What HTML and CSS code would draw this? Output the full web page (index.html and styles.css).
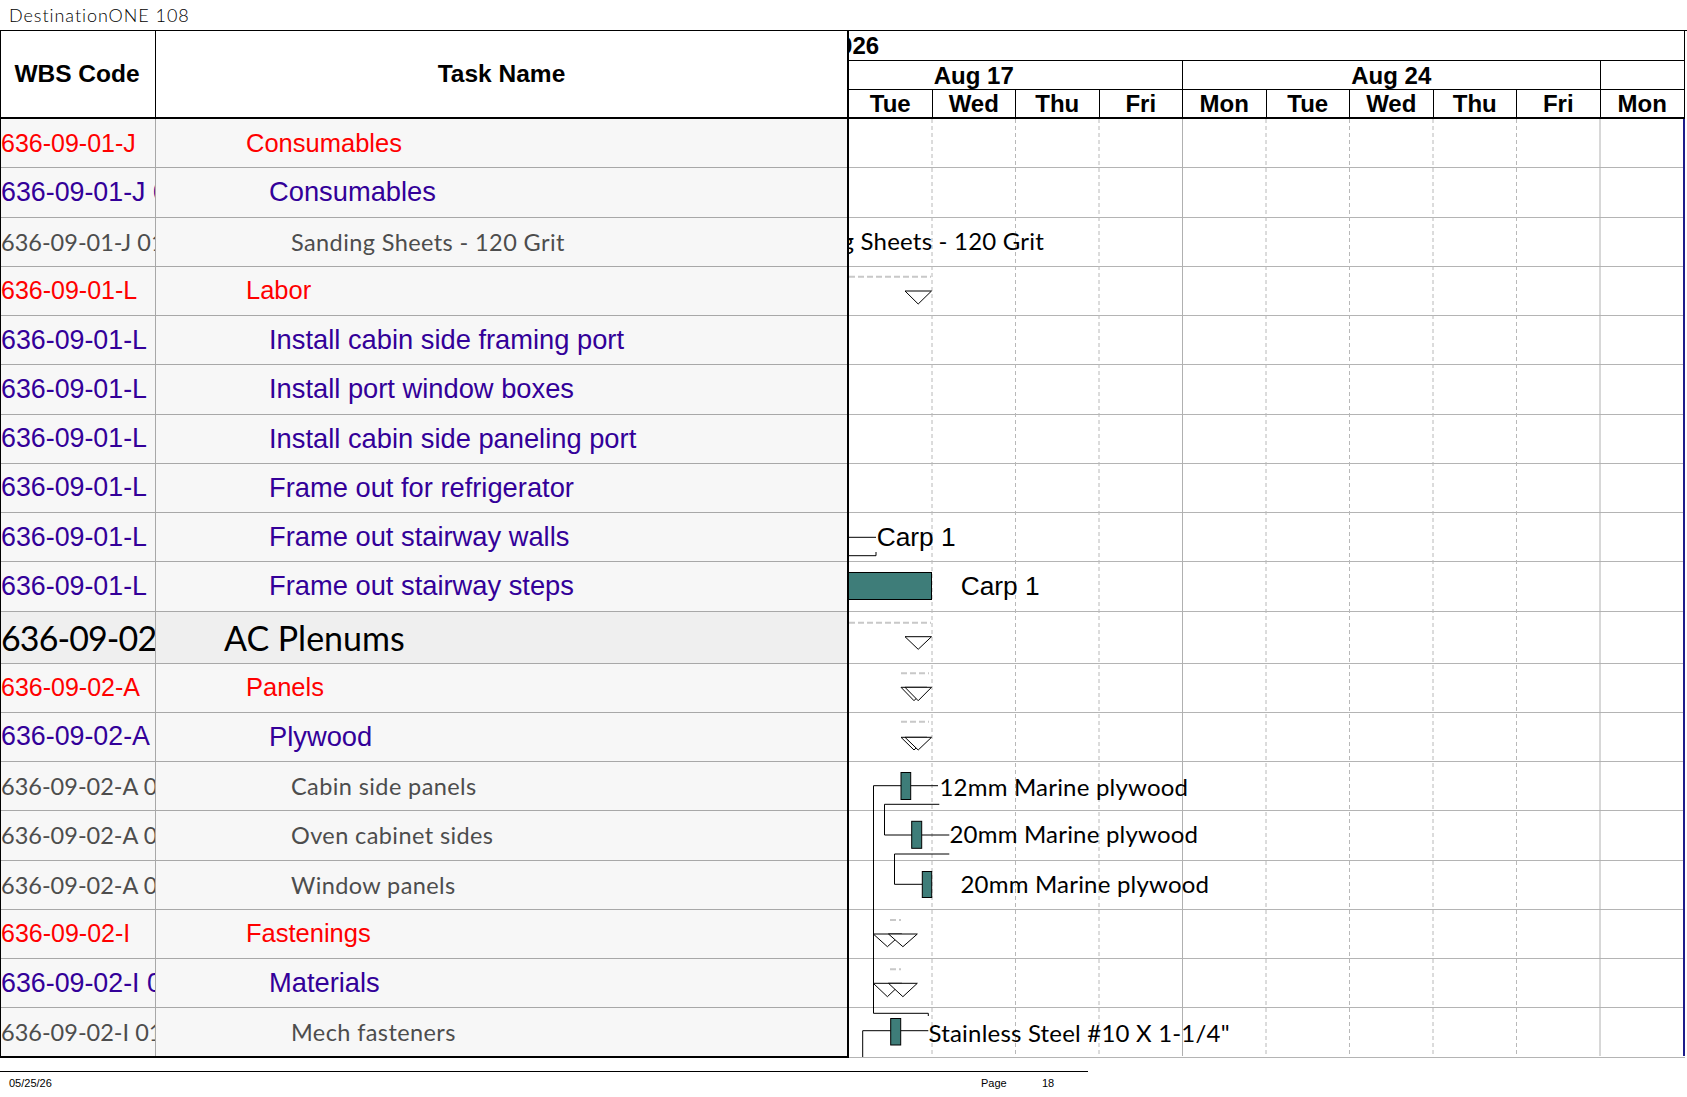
FILE: index.html
```html
<!DOCTYPE html>
<html>
<head>
<meta charset="utf-8">
<title>DestinationONE 108</title>
<link rel="stylesheet" href="styles.css">
</head>
<body>
<div class="title">DestinationONE 108</div>
<div class="sheet">
  <div class="table">
    <div class="thead">
      <div class="th-wbs">WBS Code</div>
      <div class="th-task">Task Name</div>
    </div>
    <div class="tbody">
      <div class="row l1"><div class="wbs"><span>636-09-01-J</span></div><div class="name">Consumables</div></div>
      <div class="row l2"><div class="wbs"><span>636-09-01-J 01</span></div><div class="name">Consumables</div></div>
      <div class="row l3"><div class="wbs"><span>636-09-01-J 01-01</span></div><div class="name">Sanding Sheets - 120 Grit</div></div>
      <div class="row l1"><div class="wbs"><span>636-09-01-L</span></div><div class="name">Labor</div></div>
      <div class="row l2"><div class="wbs"><span>636-09-01-L 10</span></div><div class="name">Install cabin side framing port</div></div>
      <div class="row l2"><div class="wbs"><span>636-09-01-L 11</span></div><div class="name">Install port window boxes</div></div>
      <div class="row l2"><div class="wbs"><span>636-09-01-L 12</span></div><div class="name">Install cabin side paneling port</div></div>
      <div class="row l2"><div class="wbs"><span>636-09-01-L 13</span></div><div class="name">Frame out for refrigerator</div></div>
      <div class="row l2"><div class="wbs"><span>636-09-01-L 14</span></div><div class="name">Frame out stairway walls</div></div>
      <div class="row l2"><div class="wbs"><span>636-09-01-L 15</span></div><div class="name">Frame out stairway steps</div></div>
      <div class="row l0 big"><div class="wbs"><span>636-09-02</span></div><div class="name">AC Plenums</div></div>
      <div class="row l1"><div class="wbs"><span>636-09-02-A</span></div><div class="name">Panels</div></div>
      <div class="row l2"><div class="wbs"><span>636-09-02-A 01</span></div><div class="name">Plywood</div></div>
      <div class="row l3"><div class="wbs"><span>636-09-02-A 01-01</span></div><div class="name">Cabin side panels</div></div>
      <div class="row l3"><div class="wbs"><span>636-09-02-A 01-02</span></div><div class="name">Oven cabinet sides</div></div>
      <div class="row l3"><div class="wbs"><span>636-09-02-A 01-03</span></div><div class="name">Window panels</div></div>
      <div class="row l1"><div class="wbs"><span>636-09-02-I</span></div><div class="name">Fastenings</div></div>
      <div class="row l2"><div class="wbs"><span>636-09-02-I 01</span></div><div class="name">Materials</div></div>
      <div class="row l3"><div class="wbs"><span>636-09-02-I 01-01</span></div><div class="name">Mech fasteners</div></div>
    </div>
  </div>
  <div class="chart">
    <div class="chart-head">
      <div class="year"><span>2026</span></div>
      <div class="weeks">
        <div class="wk first">Aug 17</div>
        <div class="wk">Aug 24</div>
        <div class="wk">Aug 31</div>
      </div>
      <div class="days">
        <div class="day">Tue</div>
        <div class="day">Wed</div>
        <div class="day">Thu</div>
        <div class="day">Fri</div>
        <div class="day">Mon</div>
        <div class="day">Tue</div>
        <div class="day">Wed</div>
        <div class="day">Thu</div>
        <div class="day">Fri</div>
        <div class="day last">Mon</div>
      </div>
    </div>
    <div class="chart-body">
      <div class="grow"></div><div class="grow"></div><div class="grow"></div><div class="grow"></div>
      <div class="grow"></div><div class="grow"></div><div class="grow"></div><div class="grow"></div>
      <div class="grow"></div><div class="grow"></div><div class="grow big"></div><div class="grow"></div>
      <div class="grow"></div><div class="grow"></div><div class="grow"></div><div class="grow"></div>
      <div class="grow"></div><div class="grow"></div><div class="grow"></div>
      <svg class="gantt" viewBox="849 119 836 938.5" xmlns="http://www.w3.org/2000/svg">
        <g class="vday">
          <line x1="932" y1="119" x2="932" y2="1056"/>
          <line x1="1015.5" y1="119" x2="1015.5" y2="1056"/>
          <line x1="1099" y1="119" x2="1099" y2="1056"/>
          <line x1="1266" y1="119" x2="1266" y2="1056"/>
          <line x1="1349.5" y1="119" x2="1349.5" y2="1056"/>
          <line x1="1433" y1="119" x2="1433" y2="1056"/>
          <line x1="1516.5" y1="119" x2="1516.5" y2="1056"/>
        </g>
        <g class="vweek">
          <line x1="1182.5" y1="119" x2="1182.5" y2="1056"/>
          <line x1="1600" y1="119" x2="1600" y2="1056"/>
        </g>
        <line class="status" x1="1684" y1="119" x2="1684" y2="1056"/>

        <g class="sumdash">
          <line x1="849" y1="276.7" x2="931" y2="276.7"/>
          <line x1="849" y1="622.7" x2="931" y2="622.7"/>
          <line x1="901" y1="673.3" x2="929" y2="673.3"/>
          <line x1="901" y1="721.7" x2="929" y2="721.7"/>
          <line x1="890" y1="920" x2="901" y2="920"/>
          <line x1="890" y1="969.3" x2="901" y2="969.3"/>
        </g>

        <g class="tri">
          <polygon points="905,291 931.5,291 918.2,304"/>
          <polygon points="905,636.7 931.5,636.7 918.2,649.3"/>
          <polygon points="901,687.3 927,687.3 914,700.7"/>
          <polygon points="905,687.3 931.5,687.3 918.2,700.7"/>
          <polygon points="901,737.3 927,737.3 914,750"/>
          <polygon points="905,737.3 931.5,737.3 918.2,750"/>
          <polygon points="873.3,934 901.5,934 887.4,946.7"/>
          <polygon points="888.5,934 917.3,934 902.9,946.7"/>
          <polygon points="873.3,983.3 901.5,983.3 887.4,996.7"/>
          <polygon points="888.5,983.3 917.3,983.3 902.9,996.7"/>
        </g>

        <g class="link">
          <polyline points="849,537.3 876,537.3"/>
          <polyline points="849,555.7 876,555.7 876,552"/>
          <polyline points="901,785.7 873.5,785.7 873.5,1013.3 928.3,1013.3 928.3,1016"/>
          <polyline points="910.7,785.7 938,785.7"/>
          <polyline points="939.3,804.3 884.5,804.3 884.5,835 911.7,835"/>
          <polyline points="921.7,835 949.3,835"/>
          <polyline points="949.3,854 894.5,854 894.5,884.3 922.3,884.3"/>
          <polyline points="900.7,1030.7 928.3,1030.7"/>
          <polyline points="890.7,1030.7 862.7,1030.7 862.7,1057"/>
        </g>

        <g class="bar">
          <rect x="848.5" y="572.5" width="83" height="27"/>
          <rect x="901" y="772.5" width="9.7" height="27"/>
          <rect x="911.7" y="821.3" width="10" height="27"/>
          <rect x="922.3" y="871.5" width="9.4" height="26"/>
          <rect x="890.7" y="1018.5" width="10" height="26.5"/>
        </g>

        <text class="lbl" x="1044" y="250" text-anchor="end">Sanding Sheets - 120 Grit</text>
        <text class="lbl-a" x="876.7" y="545.7">Carp 1</text>
        <text class="lbl-a" x="960.7" y="595">Carp 1</text>
        <text class="lbl" x="939.5" y="795.7">12mm Marine plywood</text>
        <text class="lbl" x="949.5" y="843.3">20mm Marine plywood</text>
        <text class="lbl" x="960.5" y="893.3">20mm Marine plywood</text>
        <text class="lbl" x="928.5" y="1041.7">Stainless Steel #10 X 1-1/4"</text>
      </svg>
    </div>
  </div>
</div>
<div class="footer">
  <div class="f-date">05/25/26</div>
  <div class="f-page">Page</div>
  <div class="f-num">18</div>
</div>
</body>
</html>
```
FILE: styles.css
```css
* { box-sizing: border-box; }

body {
  margin: 0;
  width: 1687px;
  background: #fff;
  color: #000;
  font-family: "Liberation Sans", Arial, sans-serif;
}

.title {
  height: 30px;
  padding-left: 9px;
  font-family: Lato, "DejaVu Sans", sans-serif;
  font-weight: 300;
  font-size: 18px;
  line-height: 30px;
  letter-spacing: 0.95px;
  color: #000;
  white-space: nowrap;
}

.sheet {
  display: flex;
  border-top: 1px solid #000;
}

.table {
  flex: none;
  width: 849px;
  border-left: 1px solid #000;
  border-right: 2px solid #000;
}

.thead {
  display: flex;
  height: 88px;
  border-bottom: 2px solid #000;
  font-weight: bold;
  font-size: 24.5px;
}

.th-wbs {
  flex: none;
  width: 155px;
  border-right: 1px solid #000;
  display: flex;
  align-items: center;
  justify-content: center;
  padding-right: 2px;
}

.th-task {
  flex: 1;
  display: flex;
  align-items: center;
  justify-content: center;
}

.row {
  display: flex;
  height: 49.25px;
  border-bottom: 1px solid #a8a8a8;
  background: #f7f7f7;
  white-space: nowrap;
}

.row.big {
  height: 52px;
  background: #efefef;
}

.row:last-child {
  border-bottom: 2px solid #000;
}

.wbs {
  flex: none;
  width: 155px;
  border-right: 1px solid #a8a8a8;
  overflow: hidden;
  display: flex;
  align-items: center;
}

.name {
  flex: 1;
  overflow: hidden;
  display: flex;
  align-items: center;
}

.l0 { font-family: Lato, "Open Sans", sans-serif; font-size: 34px; color: #000; }
.l0 .wbs { letter-spacing: -0.9px; }
.l1 { font-size: 25px; color: #ff0000; }
.l1 .name { font-size: 25.5px; }
.l2 { font-size: 26.8px; color: #330099; }
.l2 .name { font-size: 27.3px; }
.l3 { font-family: Lato, "Open Sans", sans-serif; font-size: 23.5px; color: #4d4d4d; }
.l3 .name { letter-spacing: 0.4px; }
.l3 .wbs { letter-spacing: 0; }

.l0 .name { padding-left: 68px; }
.l1 .name { padding-left: 90px; }
.l2 .name { padding-left: 113px; }
.l3 .name { padding-left: 135px; }

.chart {
  flex: none;
  width: 836px;
}

.chart-head {
  height: 88px;
  display: flex;
  flex-direction: column;
  border-bottom: 2px solid #000;
  border-right: 1px solid #000;
  font-weight: bold;
  font-size: 24px;
  white-space: nowrap;
}

.year {
  flex: none;
  height: 30px;
  border-bottom: 1px solid #000;
  overflow: hidden;
  display: flex;
  align-items: center;
}

.year span { margin-left: -23.3px; }

.weeks {
  flex: none;
  height: 28.5px;
  border-bottom: 1px solid #000;
  display: flex;
  overflow: hidden;
}

.wk {
  flex: none;
  width: 417.5px;
  border-right: 1px solid #000;
  text-align: center;
  line-height: 29px;
}

.wk.first { margin-left: -83.5px; }

.days {
  flex: 1;
  display: flex;
  overflow: hidden;
}

.day {
  flex: none;
  width: 83.5px;
  border-right: 1px solid #000;
  display: flex;
  align-items: center;
  justify-content: center;
  padding-top: 2px;
}

.day.last {
  flex: 1;
  border-right: 0;
}

.chart-body {
  position: relative;
}

.grow {
  height: 49.25px;
  border-bottom: 1px solid #b4b4b4;
}

.grow.big { height: 52px; }

.grow:last-child { border-bottom: 2px solid #333; }

.gantt {
  position: absolute;
  top: 0;
  left: 0;
  width: 836px;
  height: 938.5px;
  overflow: hidden;
}

.vday line { stroke: #b8b8b8; stroke-width: 1; stroke-dasharray: 4 3; }
.vweek line { stroke: #b0b0b0; stroke-width: 1; }
.status { stroke: #1c1c8a; stroke-width: 2; }

.sumdash line { stroke: #c8c8c8; stroke-width: 2; stroke-dasharray: 6 3; }
.tri polygon { fill: #fff; stroke: #000; stroke-width: 1; }
.link polyline { fill: none; stroke: #000; stroke-width: 1; }
.bar rect { fill: #3e7d79; stroke: #000; stroke-width: 1; }

.lbl {
  font-family: Lato, "Open Sans", sans-serif;
  font-size: 24px;
  letter-spacing: 0.2px;
  fill: #000;
}

.lbl-a {
  font-family: "Liberation Sans", Arial, sans-serif;
  font-size: 26.3px;
  fill: #000;
}

.footer {
  display: flex;
  width: 1088px;
  margin-top: 13.5px;
  border-top: 1.5px solid #000;
  padding-top: 5px;
  font-size: 11px;
  line-height: 13px;
  color: #000;
}

.f-date { flex: none; width: 981px; padding-left: 9px; }
.f-page { flex: none; width: 61px; }
.f-num { flex: none; }
```
